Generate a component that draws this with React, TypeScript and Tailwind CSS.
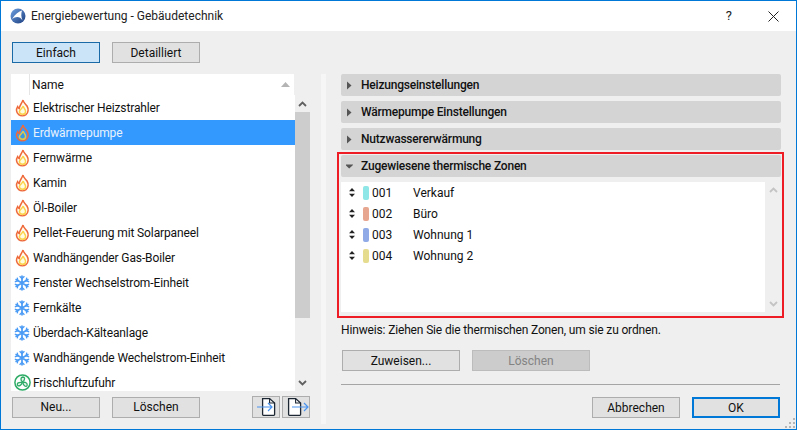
const font = { fontFamily: 'Roboto, "Noto Sans", sans-serif' };

function Flame({ selected }: { selected?: boolean }) {
  return (
    <svg width="15" height="18" viewBox="0 0 15 18" className="shrink-0">
      <path d="M8 1 C8.2 3.5 10.6 4.8 12 7 C13.8 10 13.4 13.8 11 15.6 C9 17 5.6 17 3.7 15.6 C1.2 13.8 0.9 10.2 2.6 7.6 C3 8.8 3.4 9.2 4.2 9.6 C4.4 6.6 6.8 4.6 8 1 Z" fill={selected ? "#3399ff" : "#fffdf2"} stroke="#ef6a3a" strokeWidth="1.5" />
      <path d="M8.2 7 C8.4 9 10.6 10 10.6 12.4 C10.6 14.3 9.2 15.3 7.5 15.3 C5.8 15.3 4.4 14.2 4.4 12.6 C4.4 10.6 7.4 9.6 8.2 7 Z" fill={selected ? "#3a9ae0" : "#fffde0"} stroke={selected ? "#e3c84a" : "#fcd34a"} strokeWidth="1.5" />
    </svg>
  );
}

function Snow() {
  return (
    <svg width="16" height="16" viewBox="0 0 16 16" className="shrink-0" stroke="#4a9bf5" fill="none">
      <path d="M8 0.5V15.5M1.5 4.2L14.5 11.8M14.5 4.2L1.5 11.8" strokeWidth="1.7" />
      <path d="M5.6 1.2L8 3.6L10.4 1.2M5.6 14.8L8 12.4L10.4 14.8M0.8 6.8L4 5.8L3.2 2.6M15.2 6.8L12 5.8L12.8 2.6M0.8 9.2L4 10.2L3.2 13.4M15.2 9.2L12 10.2L12.8 13.4" strokeWidth="1.3" />
    </svg>
  );
}

function Fan() {
  return (
    <svg width="17" height="17" viewBox="0 0 17 17" className="shrink-0" fill="none">
      <circle cx="8.5" cy="8.5" r="7.6" stroke="#2eab66" strokeWidth="1.5" />
      <g stroke="#2eab66" strokeWidth="1.3" fill="#e6f6ec">
        <path d="M8.5 8C6.4 6.5 6.4 3.2 8.8 3C11.2 3 11.2 6 8.5 8Z" />
        <path d="M8.8 8.6C11 7.6 13.8 9.2 13.1 11.4C12.2 13.4 9.4 11.8 8.8 8.6Z" />
        <path d="M8.2 8.7C7.8 11 5 12.8 3.6 11.2C2.4 9.4 5 7.6 8.2 8.7Z" />
      </g>
    </svg>
  );
}

function Btn({ label, w, primary, active, disabled }: { label: string; w: string; primary?: boolean; active?: boolean; disabled?: boolean }) {
  const cls = active
    ? "border-[#1a6aa8] bg-[#cce4f7] text-[#111]"
    : primary
    ? "border-2 border-[#0078d7] bg-[#e1e1e1] text-[#111]"
    : disabled
    ? "border-[#bcbcbc] bg-[#cccccc] text-[#838383]"
    : "border-[#adadad] bg-[#e1e1e1] text-[#111]";
  return (
    <div className={`${w} h-[21px] flex items-center justify-center border text-[12px] ${cls}`}>{label}</div>
  );
}

function DocIcon({ out }: { out?: boolean }) {
  return (
    <div className="w-[28px] h-[22px] border border-[#adadad] bg-[#e1e1e1] flex items-center justify-center">
      <svg width="26" height="20" viewBox="0 0 26 20" fill="none">
        <path d={out ? "M5.6 1.6H12.6L17.6 6V17.6Q17.6 18.4 16.8 18.4H6.4Q5.6 18.4 5.6 17.6Z" : "M9.6 1.6H16.6L21.6 6V17.6Q21.6 18.4 20.8 18.4H10.4Q9.6 18.4 9.6 17.6Z"} stroke="#1d2733" strokeWidth="1.3" fill="#fff" />
        <path d={out ? "M12.6 1.6V6H17.6" : "M16.6 1.6V6H21.6"} stroke="#1d2733" strokeWidth="1.1" />
        <path d={out ? "M9 10H25M21 6L25 10L21 14" : "M4 10H19M15 6L19 10L15 14"} stroke="#4a94f0" strokeWidth="1.2" />
      </svg>
    </div>
  );
}

function ArrowUp({ color = "#606060" }: { color?: string }) {
  return (
    <svg width="9" height="6" viewBox="0 0 9 6" fill="none"><path d="M1 5L4.5 1.5L8 5" stroke={color} strokeWidth="1.8" /></svg>
  );
}
function ArrowDown({ color = "#606060" }: { color?: string }) {
  return (
    <svg width="9" height="6" viewBox="0 0 9 6" fill="none"><path d="M1 1L4.5 4.5L8 1" stroke={color} strokeWidth="1.8" /></svg>
  );
}

const items: [string, string][] = [
  ["Elektrischer Heizstrahler", "f"],
  ["Erdwärmepumpe", "fs"],
  ["Fernwärme", "f"],
  ["Kamin", "f"],
  ["Öl-Boiler", "f"],
  ["Pellet-Feuerung mit Solarpaneel", "f"],
  ["Wandhängender Gas-Boiler", "f"],
  ["Fenster Wechselstrom-Einheit", "s"],
  ["Fernkälte", "s"],
  ["Überdach-Kälteanlage", "s"],
  ["Wandhängende Wechelstrom-Einheit", "s"],
  ["Frischluftzufuhr", "a"],
];

const zones = [
  ["001", "Verkauf", "bg-[#8fe6e6]"],
  ["002", "Büro", "bg-[#e6a68f]"],
  ["003", "Wohnung 1", "bg-[#8faae6]"],
  ["004", "Wohnung 2", "bg-[#e6dc8f]"],
];

function Section({ title, open }: { title: string; open?: boolean }) {
  return (
    <div className="h-[22px] rounded-[2px] bg-[#d4d4d4] flex items-center pl-[5px] font-medium text-[12px] tracking-[-0.2px] text-[#111]">
      <svg width="7" height="9" viewBox="0 0 7 9" className="mr-[8px]">
        {open ? <path d="M-1 2.5H7.5L3.2 6.5Z" fill="#555" /> : <path d="M1 0.5L5.5 4.5L1 8.5Z" fill="#555" />}
      </svg>
      {title}
    </div>
  );
}

export default function App() {
  return (
    <div style={font} className="relative w-[797px] h-[430px] border border-[#0078d7] bg-[#efefef] flex flex-col overflow-hidden text-[12px] text-[#111]">
      <div className="h-[30px] bg-white flex items-center shrink-0 pl-[9px]">
        <svg width="16" height="16" viewBox="0 0 16 16" className="shrink-0">
          <defs>
            <linearGradient id="lg" x1="0" y1="0" x2="1" y2="1"><stop offset="0" stopColor="#6fa0e0" /><stop offset="1" stopColor="#1c3f80" /></linearGradient>
          </defs>
          <circle cx="8" cy="8" r="7.5" fill="url(#lg)" />
          <path d="M2 11C5 6 9 3.5 12 2.5C11 5 11 9 12.5 12.5C10 8 6 8 2 11Z" fill="#fff" />
        </svg>
        <span className="ml-[5px] text-[12px] text-[#222]">Energiebewertung - Gebäudetechnik</span>
        <div className="ml-auto flex items-center pr-[17px]">
          <span className="text-[13px] text-[#222] mr-[36px]">?</span>
          <svg width="11" height="11" viewBox="0 0 11 11" fill="none"><path d="M0.5 0.5L10.5 10.5M10.5 0.5L0.5 10.5" stroke="#222" strokeWidth="1" /></svg>
        </div>
      </div>
      <div className="flex-1 flex min-h-0">
        <div className="w-[320px] shrink-0 flex flex-col pl-[10px] pt-[11px]">
          <div className="flex gap-[12px] pl-[1px]">
            <Btn label="Einfach" w="w-[88px]" active />
            <Btn label="Detailliert" w="w-[88px]" />
          </div>
          <div className="mt-[11px] w-[283px] h-[21px] bg-white flex items-center">
            <div className="w-[19px] h-full border-r border-[#e5e5e5]" />
            <span className="ml-[2px] font-normal">Name</span>
            <svg width="9" height="5" viewBox="0 0 9 5" className="ml-auto mr-[4px]"><path d="M0 5L4.5 0L9 5Z" fill="#b4b4b4" /></svg>
          </div>
          <div className="flex h-[296px] w-[299px]">
            <div className="w-[284px] bg-white overflow-hidden">
              {items.map(([n, k]) => (
                <div key={n} className={`h-[25px] flex items-center ${k === "fs" ? "bg-[#3399ff] text-[#e8f2fc]" : ""}`}>
                  <div className="w-[21px] flex justify-center pl-[1px] shrink-0">
                    {k[0] === "f" ? <Flame selected={k === "fs"} /> : k === "s" ? <Snow /> : <Fan />}
                  </div>
                  <span className="whitespace-nowrap ml-[1px] tracking-[-0.12px]">{n}</span>
                </div>
              ))}
            </div>
            <div className="w-[15px] flex flex-col items-center">
              <div className="h-[17px] flex items-center justify-center"><ArrowUp /></div>
              <div className="h-[206px] w-full bg-[#cdcdcd]" />
              <div className="flex-1 flex items-end justify-center pb-[5px]"><ArrowDown /></div>
            </div>
          </div>
          <div className="mt-[5px] flex items-center pl-[1px] w-[299px]">
            <Btn label="Neu..." w="w-[88px]" />
            <div className="w-[12px]" />
            <Btn label="Löschen" w="w-[88px]" />
            <div className="ml-auto flex gap-[2px]">
              <DocIcon />
              <DocIcon out />
            </div>
          </div>
        </div>
        <div className="w-[5px] shrink-0 mt-[43px] mb-[5px] bg-[#f6f6f6]" />
        <div className="flex-1 min-w-0 flex flex-col pl-[15px] pr-[15px] pt-[43px]">
          <div className="flex flex-col gap-[5px] w-[440px]">
            <Section title="Heizungseinstellungen" />
            <Section title="Wärmepumpe Einstellungen" />
            <Section title="Nutzwassererwärmung" />
          </div>
          <div className="mt-[2px] -ml-[4px] w-[447px] shrink-0 h-[166px] border-2 border-[#ee1c25] px-[2px] pt-[1px] flex flex-col">
            <div className="w-[440px]"><Section title="Zugewiesene thermische Zonen" open /></div>
            <div className="mt-[5px] flex w-[440px] h-[130px]">
              <div className="flex-1 bg-white">
                {zones.map(([id, name, c]) => (
                  <div key={id} className="h-[21px] flex items-center">
                    <svg width="6" height="9" viewBox="0 0 6 9" className="ml-[8px] mr-[8px]"><path d="M3 0L6 3.2H0ZM3 9L0 5.8H6Z" fill="#222" /></svg>
                    <div className={`w-[6px] h-[14px] rounded-[2px] ${c}`} />
                    <span className="ml-[3px] w-[41px]">{id}</span>
                    <span>{name}</span>
                  </div>
                ))}
              </div>
              <div className="w-[16px] flex flex-col items-center justify-between py-[5px]">
                <ArrowUp color="#c4c4c4" />
                <ArrowDown color="#c4c4c4" />
              </div>
            </div>
          </div>
          <div className="mt-[3px] h-[17px] flex items-center whitespace-nowrap tracking-[-0.15px]">Hinweis: Ziehen Sie die thermischen Zonen, um sie zu ordnen.</div>
          <div className="mt-[12px] flex gap-[12px] pl-[1px]">
            <Btn label="Zuweisen..." w="w-[118px]" />
            <Btn label="Löschen" w="w-[118px]" disabled />
          </div>
          <div className="mt-[13px] h-px w-[439px] bg-[#a5a5a5]" />
          <div className="mt-[12px] w-[439px] flex justify-end gap-[12px]">
            <Btn label="Abbrechen" w="w-[88px]" />
            <Btn label="OK" w="w-[88px]" primary />
          </div>
        </div>
      </div>
      <svg width="10" height="10" viewBox="0 0 10 10" className="absolute right-[1px] bottom-[1px]" fill="#b5b5b5">
        <rect x="8" y="0" width="2" height="2" /><rect x="4" y="4" width="2" height="2" /><rect x="8" y="4" width="2" height="2" />
        <rect x="0" y="8" width="2" height="2" /><rect x="4" y="8" width="2" height="2" /><rect x="8" y="8" width="2" height="2" />
      </svg>
    </div>
  );
}
